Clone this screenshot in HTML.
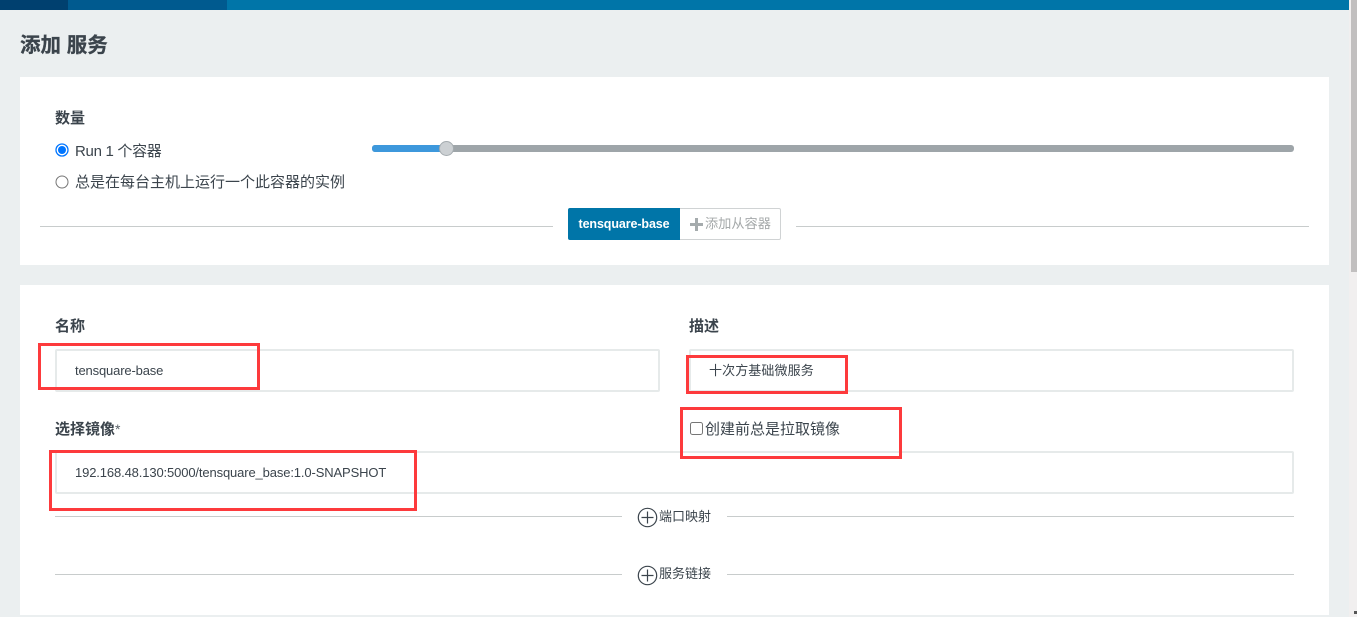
<!DOCTYPE html>
<html lang="zh">
<head>
<meta charset="utf-8">
<title>添加 服务</title>
<style>
html,body{margin:0;padding:0;width:1357px;height:617px;overflow:hidden;background:#ebeff0;}
body{position:relative;font-family:"Liberation Sans","Noto Sans CJK SC",sans-serif;color:#3b444c;font-size:13px;}
div,span,svg{position:absolute;box-sizing:border-box;}
.t{white-space:nowrap;line-height:20px;}
.lb{font-weight:700;font-size:14px;color:#3b444c;}
.cn{font-size:14px;}
.card{background:#fff;left:20px;width:1309px;}
.inp{background:#fff;border:2px solid #e6eaea;border-radius:2px;}
.hr{height:1px;background:#c8cccc;}
.red{border:3px solid #fd3a3c;}
</style>
</head>
<body>
<div style="left:0;top:0;width:1349px;height:10px;background:#0075a8"></div>
<div style="left:68px;top:0;width:159px;height:10px;background:#005a8f"></div>
<div style="left:0;top:0;width:68px;height:10px;background:#00406f"></div>
<div style="left:1349px;top:0;width:8px;height:617px;background:#f1efef"></div>
<div style="left:1351px;top:0;width:6px;height:272px;background:#c1bfbf"></div>
<div style="left:1354px;top:611px;width:3px;height:3px;background:#555"></div>

<div class="t" style="left:20px;top:33px;font-size:20.5px;line-height:26px;font-weight:700;color:#3b444c;-webkit-text-stroke:.3px #3b444c">添加 服务</div>

<div class="card" style="top:77px;height:188px"></div>
<div class="card" style="top:285px;height:330px"></div>

<div class="t lb" style="left:55px;top:109px;font-size:15px">数量</div>

<svg style="left:55px;top:143px" width="14" height="14" viewBox="0 0 14 14"><circle cx="7" cy="7" r="6" fill="#fff" stroke="#0075ff" stroke-width="1.3"/><circle cx="7" cy="7" r="4" fill="#0075ff"/></svg>
<div class="t" style="left:75px;top:142px;font-size:15px;letter-spacing:-.3px">Run 1 个容器</div>
<svg style="left:55px;top:175px" width="14" height="14" viewBox="0 0 14 14"><circle cx="7" cy="7" r="6" fill="#fff" stroke="#767676" stroke-width="1"/></svg>
<div class="t cn" style="left:75px;top:173px;font-size:15px">总是在每台主机上运行一个此容器的实例</div>

<div style="left:372px;top:145px;width:922px;height:7px;border-radius:3px;background:#9ea5a9"></div>
<div style="left:372px;top:145px;width:75px;height:7px;border-radius:3px 0 0 3px;background:#3d98dc"></div>
<div style="left:439px;top:141px;width:15px;height:15px;border-radius:50%;background:#ccd0d3;border:1px solid #a4abaf"></div>

<div class="hr" style="left:40px;top:226px;width:513px"></div>
<div class="hr" style="left:796px;top:226px;width:513px"></div>
<div class="t" style="left:568px;top:208px;width:112px;height:32px;background:#0075a8;color:#fff;font-weight:700;font-size:12.5px;letter-spacing:-.1px;line-height:32px;text-align:center;border-radius:2px 0 0 2px">tensquare-base</div>
<div style="left:680px;top:208px;width:101px;height:32px;border:1px solid #d0d3d4;border-left:0;border-radius:0 2px 2px 0"></div>
<svg style="left:690px;top:218px" width="13" height="13" viewBox="0 0 13 13"><path d="M5 0h3v5h5v3H8v5H5V8H0V5h5z" fill="#a5abad"/></svg>
<div class="t" style="left:705px;top:214px;font-size:13.2px;color:#a5a9aa">添加从容器</div>

<div class="t lb" style="left:55px;top:317px;font-size:15px">名称</div>
<div class="t lb" style="left:689px;top:317px;font-size:15px">描述</div>
<div class="inp" style="left:55px;top:349px;width:605px;height:43px"></div>
<div class="inp" style="left:689px;top:349px;width:605px;height:43px"></div>
<div class="t" style="left:75px;top:361px;font-size:13px;letter-spacing:-.15px">tensquare-base</div>
<div class="t" style="left:709px;top:361px;font-size:13px;letter-spacing:.1px">十次方基础微服务</div>

<div class="t lb" style="left:55px;top:419px;font-size:15px">选择镜像<span style="position:static;font-weight:400;color:#5a6268;font-size:14px">*</span></div>
<svg style="left:690px;top:422px" width="13" height="13" viewBox="0 0 13 13"><rect x=".5" y=".5" width="12" height="12" rx="2" fill="#fff" stroke="#767676"/></svg>
<div class="t" style="left:705px;top:420px;font-size:15px;color:#3b444c">创建前总是拉取镜像</div>
<div class="inp" style="left:55px;top:451px;width:1239px;height:43px"></div>
<div class="t" style="left:75px;top:463px;font-size:13px;letter-spacing:-.13px">192.168.48.130:5000/tensquare_base:1.0-SNAPSHOT</div>

<div class="hr" style="left:55px;top:516px;width:567px"></div>
<div class="hr" style="left:727px;top:516px;width:567px"></div>
<svg style="left:637px;top:507px" width="21" height="21" viewBox="0 0 21 21"><circle cx="10.5" cy="10.5" r="9.2" fill="#fff" stroke="#3b444c" stroke-width="1.2"/><path d="M10.5 4.5v12M4.5 10.5h12" fill="none" stroke="#3b444c" stroke-width="1.2"/></svg>
<div class="t" style="left:659px;top:507px;font-size:13px">端口映射</div>

<div class="hr" style="left:55px;top:574px;width:567px"></div>
<div class="hr" style="left:727px;top:574px;width:567px"></div>
<svg style="left:637px;top:565px" width="21" height="21" viewBox="0 0 21 21"><circle cx="10.5" cy="10.5" r="9.2" fill="#fff" stroke="#3b444c" stroke-width="1.2"/><path d="M10.5 4.5v12M4.5 10.5h12" fill="none" stroke="#3b444c" stroke-width="1.2"/></svg>
<div class="t" style="left:659px;top:564px;font-size:13px">服务链接</div>

<div class="red" style="left:38px;top:343px;width:222px;height:47px"></div>
<div class="red" style="left:686px;top:355px;width:162px;height:39px"></div>
<div class="red" style="left:680px;top:407px;width:222px;height:52px"></div>
<div class="red" style="left:49px;top:450px;width:368px;height:61px"></div>
</body>
</html>
